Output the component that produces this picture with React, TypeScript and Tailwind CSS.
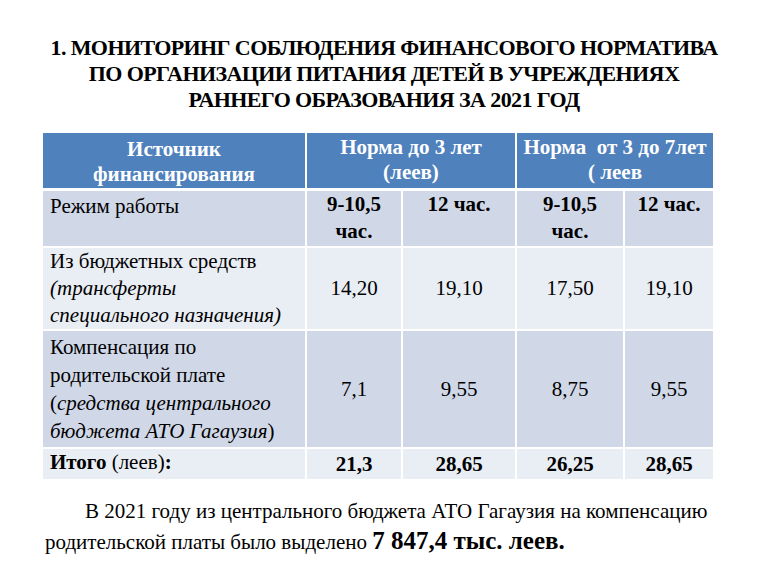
const cell = 'border-2 border-white';

function Num({ children }: { children: React.ReactNode }) {
  return <td className={`${cell} text-center align-middle`}>{children}</td>;
}

export default function App() {
  return (
    <div className="flex h-[576px] w-[768px] flex-col overflow-hidden bg-white font-['Liberation_Serif','Times_New_Roman',serif] text-black">
      <h1 className="pt-[35px] text-center text-[22px] leading-[26px] font-bold tracking-[-0.6px]">
        1. МОНИТОРИНГ СОБЛЮДЕНИЯ ФИНАНСОВОГО НОРМАТИВА
        <br />
        ПО ОРГАНИЗАЦИИ ПИТАНИЯ ДЕТЕЙ В УЧРЕЖДЕНИЯХ
        <br />
        РАННЕГО ОБРАЗОВАНИЯ ЗА 2021 ГОД
      </h1>

      <table className="mt-[20px] ml-[43px] w-[670px] table-fixed border-collapse text-[21px] leading-[27px]">
        <colgroup>
          <col className="w-[263px]" />
          <col className="w-[96px]" />
          <col className="w-[114px]" />
          <col className="w-[108px]" />
          <col className="w-[89px]" />
        </colgroup>
        <thead>
          <tr className="h-[56px] bg-[#4f81bd] text-[21px] leading-[25px] font-bold text-white">
            <th className={`${cell} border-t-0 border-b-[3px] border-l-0 pb-[1px] align-bottom`}>
              Источник
              <br />
              финансирования
            </th>
            <th colSpan={2} className={`${cell} border-t-0 border-b-[3px] pt-[2px] align-top`}>
              Норма до 3 лет
              <br />
              (леев)
            </th>
            <th colSpan={2} className={`${cell} border-t-0 border-r-0 border-b-[3px] pt-[2px] align-top`}>
              Норма&nbsp; от 3 до 7лет
              <br />( леев
            </th>
          </tr>
        </thead>
        <tbody>
          <tr className="h-[58px] bg-[#d0d8e8]">
            <td className={`${cell} border-l-0 pt-[2px] pl-[7px] align-top`}>Режим работы</td>
            <td className={`${cell} text-center align-top font-bold`}>
              9-10,5
              <br />
              час.
            </td>
            <td className={`${cell} text-center align-top font-bold`}>12 час.</td>
            <td className={`${cell} text-center align-top font-bold`}>
              9-10,5
              <br />
              час.
            </td>
            <td className={`${cell} border-r-0 text-center align-top font-bold`}>12 час.</td>
          </tr>
          <tr className="h-[83px] bg-[#e9edf4]">
            <td className={`${cell} border-l-0 pl-[7px] align-top`}>
              Из бюджетных средств
              <br />
              <i>(трансферты</i>
              <br />
              <i>специального назначения)</i>
            </td>
            <Num>14,20</Num>
            <Num>19,10</Num>
            <Num>17,50</Num>
            <td className={`${cell} border-r-0 text-center align-middle`}>19,10</td>
          </tr>
          <tr className="h-[118px] bg-[#d0d8e8]">
            <td className={`${cell} border-l-0 pt-[2px] pl-[7px] align-top leading-[28px]`}>
              Компенсация по
              <br />
              родительской плате
              <br />(<i>средства центрального</i>
              <br />
              <i>бюджета АТО Гагаузия</i>)
            </td>
            <Num>7,1</Num>
            <Num>9,55</Num>
            <Num>8,75</Num>
            <td className={`${cell} border-r-0 text-center align-middle`}>9,55</td>
          </tr>
          <tr className="h-[31px] bg-[#e9edf4]">
            <td className={`${cell} border-b-0 border-l-0 pl-[7px] align-top`}>
              <b>Итого</b> (леев)<b>:</b>
            </td>
            <td className={`${cell} border-b-0 text-center font-bold`}>21,3</td>
            <td className={`${cell} border-b-0 text-center font-bold`}>28,65</td>
            <td className={`${cell} border-b-0 text-center font-bold`}>26,25</td>
            <td className={`${cell} border-r-0 border-b-0 text-center font-bold`}>28,65</td>
          </tr>
        </tbody>
      </table>

      <p className="mt-[17px] ml-[45px] w-[680px] text-[21px] leading-[30px] whitespace-nowrap">
        <span className="pl-[40px]">В 2021 году из центрального бюджета АТО Гагаузия на компенсацию</span>
        <br />
        родительской платы было выделено <b className="text-[25px]">7 847,4 тыс. леев.</b>
      </p>
    </div>
  );
}
